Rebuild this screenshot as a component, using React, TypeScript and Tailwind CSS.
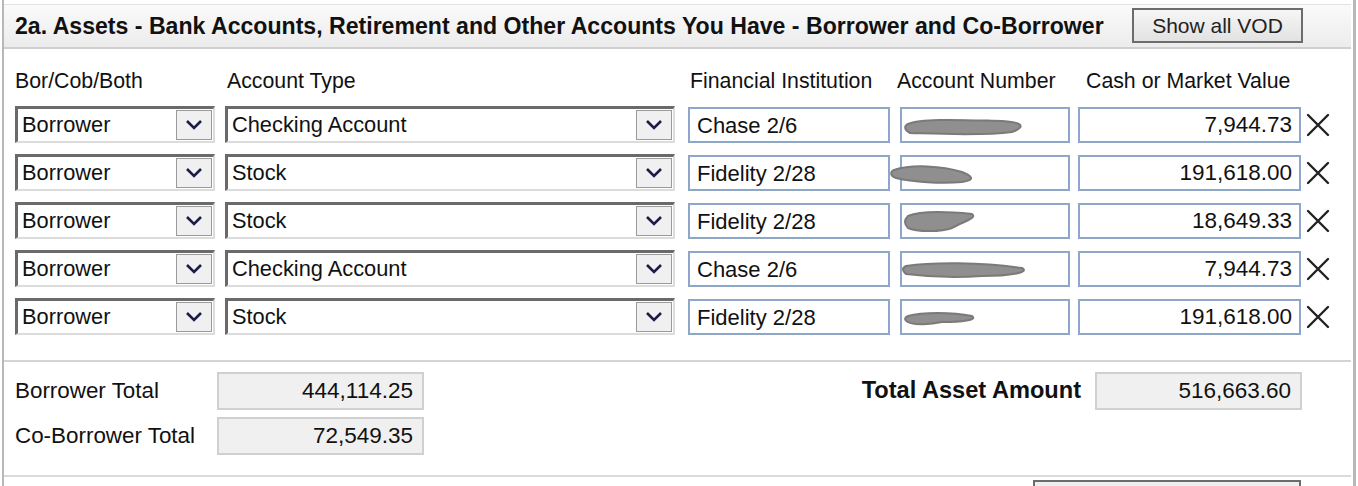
import React from "react";

const rows = [
  { type: "Checking Account", inst: "Chase 2/6", value: "7,944.73", blot: 0 },
  { type: "Stock", inst: "Fidelity 2/28", value: "191,618.00", blot: 1 },
  { type: "Stock", inst: "Fidelity 2/28", value: "18,649.33", blot: 2 },
  { type: "Checking Account", inst: "Chase 2/6", value: "7,944.73", blot: 3 },
  { type: "Stock", inst: "Fidelity 2/28", value: "191,618.00", blot: 4 },
];

const blots = [
  "M6 12 C20 6 60 8 100 9 C118 10 126 14 110 20 C80 24 40 22 8 21 C2 18 2 14 6 12 Z",
  "M-8 10 C10 4 40 6 60 12 C70 16 74 20 60 22 C40 24 10 22 -6 18 C-12 16 -12 12 -8 10 Z",
  "M6 8 C20 2 50 4 70 6 C76 10 60 14 50 20 C40 24 14 24 6 20 C2 16 2 12 6 8 Z",
  "M4 10 C30 6 80 6 120 12 C128 16 110 20 80 20 C50 22 20 20 4 18 C0 14 0 12 4 10 Z",
  "M6 12 C20 8 50 8 70 12 C76 16 60 18 40 18 C30 20 12 22 6 18 C2 16 2 14 6 12 Z",
];

const Chevron = () => (
  <svg width="18" height="12" viewBox="0 0 18 12">
    <path d="M2 2 L9 9 L16 2" fill="none" stroke="#1c1c4a" strokeWidth="2.6" />
  </svg>
);

const Select = ({ value, width }: { value: string; width: string }) => (
  <div className={`${width} h-[37px] flex items-stretch bg-white border-t-[3px] border-l-[3px] border-r-2 border-b-2 border-t-[#6a6a6a] border-l-[#6a6a6a] border-r-[#dcdcdc] border-b-[#dcdcdc]`}>
    <div className="flex-1 flex items-center pl-[4px] text-[21.8px] text-[#111]">{value}</div>
    <div className="w-[36px] my-[1px] mr-[1px] flex items-center justify-center bg-[#f0f0f0] border border-[#9a9a9a]">
      <Chevron />
    </div>
  </div>
);

const XIcon = () => (
  <svg width="26" height="26" viewBox="0 0 26 26">
    <path d="M3 3 L23 23 M23 3 L3 23" stroke="#222" strokeWidth="2.4" strokeLinecap="round" />
  </svg>
);

export default function App() {
  return (
    <div className="w-[1358px] h-[486px] bg-white overflow-hidden font-['Liberation_Sans',Arial,sans-serif] text-[#111]">
      <div className="ml-[2px] w-[1354px] h-full border-l-2 border-r-[3px] border-[#b8b8b8] flex flex-col">
        <div className="shrink-0 mt-[4px] mr-[2px] h-[45px] border-t border-b-2 border-t-[#e2e2e2] border-b-[#cfcfcf] bg-gradient-to-b from-[#fafafa] to-[#ececec] flex items-center pl-[11px] pr-[48px]">
          <h2 className="flex-1 text-[23.1px] font-bold whitespace-nowrap">
            2a. Assets - Bank Accounts, Retirement and Other Accounts You Have - Borrower and Co-Borrower
          </h2>
          <button className="w-[171px] h-[35px] mt-[-2px] border-2 border-[#6c6c6c] bg-gradient-to-b from-[#f6f6f6] to-[#e2e2e2] text-[21px] text-[#222]">
            Show all VOD
          </button>
        </div>

        <div className="shrink-0 pl-[11px] mt-[19px] flex text-[21.3px] h-[26px] leading-[26px]">
          <div className="w-[212px]">Bor/Cob/Both</div>
          <div className="w-[463px]">Account Type</div>
          <div className="w-[207px]">Financial Institution</div>
          <div className="w-[189px]">Account Number</div>
          <div>Cash or Market Value</div>
        </div>

        <div className="shrink-0 pl-[11px] flex flex-col gap-[11px] mt-[12px]">
          {rows.map((r, i) => (
            <div key={i} className="flex items-center h-[37px]">
              <Select value="Borrower" width="w-[200px]" />
              <div className="w-[10px]" />
              <Select value={r.type} width="w-[450px]" />
              <div className="w-[13px]" />
              <div className="w-[202px] h-[36px] border-2 border-[#8ea6c8] flex items-center pl-[7px] pt-[1px] text-[22px]">
                {r.inst}
              </div>
              <div className="w-[10px]" />
              <div className="relative w-[170px] h-[36px] border-2 border-[#8ea6c8] bg-white">
                <svg className="absolute left-0 top-[3px] overflow-visible" width="130" height="28" viewBox="0 0 130 28">
                  <path d={blots[r.blot]} fill="#8f8f8f" stroke="#7a7a7a" strokeWidth="2" />
                </svg>
              </div>
              <div className="w-[8px]" />
              <div className="w-[223px] h-[36px] border-2 border-[#8ea6c8] flex items-center justify-end pr-[7px] pt-[1px] text-[22.5px]">
                {r.value}
              </div>
              <div className="ml-[4px]">
                <XIcon />
              </div>
            </div>
          ))}
        </div>

        <div className="shrink-0 mt-[25px] mr-[2px] border-t-2 border-[#d4d4d4]" />

        <div className="shrink-0 flex pl-[11px] pt-[10px] pr-[51px]">
          <div className="flex flex-col gap-[7px]">
            <div className="flex items-center h-[38px]">
              <div className="w-[202px] text-[22.4px]">Borrower Total</div>
              <div className="w-[207px] h-[38px] bg-[#f0f0f0] border-2 border-[#d0d0d0] flex items-center justify-end pr-[9px] text-[22.5px]">
                444,114.25
              </div>
            </div>
            <div className="flex items-center h-[38px]">
              <div className="w-[202px] text-[22.4px]">Co-Borrower Total</div>
              <div className="w-[207px] h-[38px] bg-[#f0f0f0] border-2 border-[#d0d0d0] flex items-center justify-end pr-[9px] text-[22.5px]">
                72,549.35
              </div>
            </div>
          </div>
          <div className="flex-1 flex justify-end items-start">
            <div className="flex items-center h-[38px]">
              <div className="text-[23.6px] font-bold mr-[14px]">Total Asset Amount</div>
              <div className="w-[207px] h-[38px] bg-[#f0f0f0] border-2 border-[#d0d0d0] flex items-center justify-end pr-[9px] text-[22.5px]">
                516,663.60
              </div>
            </div>
          </div>
        </div>

        <div className="shrink-0 mt-[20px] mr-[2px] border-t-2 border-[#dadada] relative">
          <div className="absolute left-[1029px] top-[3px] w-[268px] h-[20px] border-2 border-[#6c6c6c] bg-[#efefef]" />
        </div>
      </div>
    </div>
  );
}
